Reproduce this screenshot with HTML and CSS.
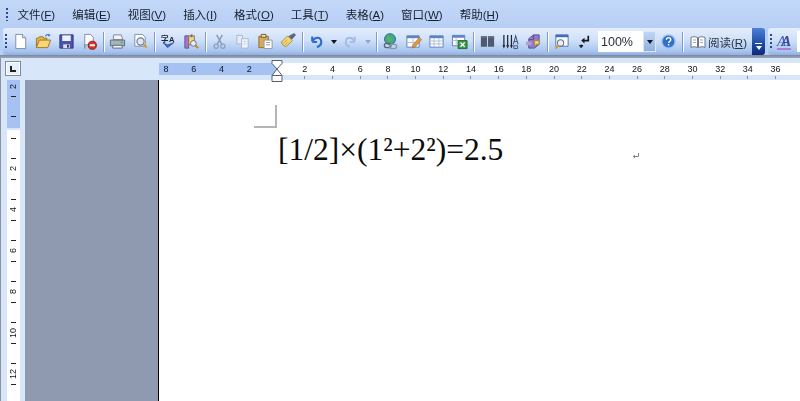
FILE: index.html
```html
<!DOCTYPE html>
<html lang="zh">
<head>
<meta charset="utf-8">
<title>文档</title>
<link rel="stylesheet" href="styles.css">
</head>
<body>
<div class="app">
  <nav class="menubar">
    <span class="grip grip-menu"></span>
    <span class="menu-item">文件(<u>F</u>)</span>
    <span class="menu-item">编辑(<u>E</u>)</span>
    <span class="menu-item">视图(<u>V</u>)</span>
    <span class="menu-item">插入(<u>I</u>)</span>
    <span class="menu-item">格式(<u>O</u>)</span>
    <span class="menu-item">工具(<u>T</u>)</span>
    <span class="menu-item">表格(<u>A</u>)</span>
    <span class="menu-item">窗口(<u>W</u>)</span>
    <span class="menu-item">帮助(<u>H</u>)</span>
  </nav>

  <div class="toolrow">
    <div class="toolbar">
      <span class="gripbox"><span class="grip"></span></span>
      <span class="slot"><svg viewBox="0 0 18 18"><path d="M4 1.500h7l3.500 3.500v11.500H4z" fill="#fff" stroke="#7f8ba3"/><path d="M11 1.500V5h3.500" fill="#dfe7f5" stroke="#7f8ba3"/></svg></span>
      <span class="slot"><svg viewBox="0 0 18 18"><path d="M1.500 15.500V5.500h2l1-1.500h4l1 1.500h3v2" fill="#e8b84a" stroke="#9a7420"/><path d="M1.500 15.500l3-8h12l-3 8z" fill="#f7d774" stroke="#9a7420"/><path d="M11 3.500c1-2 3-2.500 4.500-1" fill="none" stroke="#4a78c8" stroke-width="1.200"/><path d="M14.500 0.500l2 2.500-2.800 .6z" fill="#4a78c8"/></svg></span>
      <span class="slot"><svg viewBox="0 0 18 18"><path d="M2 2h14v14H2z" fill="#4a55a8" stroke="#2d3480"/><path d="M4.500 2.500h9v6h-9z" fill="#eef1fb"/><path d="M5.500 12h7v4h-7z" fill="#d8dcef"/><path d="M9.500 12.500h2v3h-2z" fill="#2d3480"/></svg></span>
      <span class="slot"><svg viewBox="0 0 18 18"><path d="M4 1.500h6l3 3v8H4v4z" fill="#fff" stroke="#7f8ba3"/><circle cx="12" cy="13" r="4.300" fill="#d8362a" stroke="#8e1e16"/><path d="M9.300 12h5.400v2H9.300z" fill="#fff"/></svg></span>
      <span class="sep"></span>
      <span class="slot"><svg viewBox="0 0 18 18"><path d="M5 2h8l1.500 5h-10z" fill="#f2f4f7" stroke="#7d8794"/><path d="M1.500 7.500h15v6h-15z" fill="#a9b2bd" stroke="#5f6a76"/><path d="M4 13h10v3H4z" fill="#eef0f3" stroke="#5f6a76"/><path d="M12.500 9h2v2h-2z" fill="#3cc24a"/></svg></span>
      <span class="slot"><svg viewBox="0 0 18 18"><path d="M3 1.500h8l3 3V14H3z" fill="#fff" stroke="#7f8ba3"/><circle cx="9" cy="9" r="3.800" fill="#dbe8f8" stroke="#6d7a90" stroke-width="1.200"/><path d="M12 12l3.500 3.500" stroke="#d69a2a" stroke-width="2.200"/></svg></span>
      <span class="sep"></span>
      <span class="slot"><svg viewBox="0 0 18 18"><text x="1" y="9.500" class="glyph">字</text><text x="9.500" y="9.500" class="glyph-latin">A</text><path d="M3.500 10.500l4.500 5 7-5.500-7 2.500z" fill="#3568c4" stroke="#274a9a" stroke-width=".6"/></svg></span>
      <span class="slot"><svg viewBox="0 0 18 18"><path d="M2 3h4v13H2z" fill="#a678c8" stroke="#6a4a94"/><path d="M6 3h6v9H6z" fill="#f0d78c" stroke="#8a7440"/><path d="M8 1.500h2v3H8z" fill="#6a6f7a"/><circle cx="11" cy="11" r="3" fill="#e8eef8" stroke="#6b6b6b"/><path d="M13 13l3 3" stroke="#b98a2a" stroke-width="2"/></svg></span>
      <span class="sep"></span>
      <span class="slot"><svg viewBox="0 0 18 18"><circle cx="5.500" cy="14" r="2.200" fill="none" stroke="#8ea0bc" stroke-width="1.400"/><circle cx="12.500" cy="14" r="2.200" fill="none" stroke="#8ea0bc" stroke-width="1.400"/><path d="M6.500 12L12 2M11.500 12L6 2" stroke="#8a9ab5" stroke-width="1.500"/></svg></span>
      <span class="slot"><svg viewBox="0 0 18 18"><path d="M3 2.500h6v9H3z" fill="#e6ecf6" stroke="#a9b7cd"/><path d="M8 6h7v10H8z" fill="#eef2f9" stroke="#a9b7cd"/><path d="M10 9h3M10 11.500h3" stroke="#c4cfe0"/></svg></span>
      <span class="slot"><svg viewBox="0 0 18 18"><path d="M2 3.500h10v12H2z" fill="#d9a957" stroke="#8f6b2c"/><path d="M4.500 1.500h5v3h-5z" fill="#f2e4a0" stroke="#6b5a2c"/><path d="M7.500 7.500h8.500v9H7.500z" fill="#fff" stroke="#8d96a8"/><path d="M9.500 10h4.500M9.500 12.500h4.500" stroke="#8d96a8"/></svg></span>
      <span class="slot"><svg viewBox="0 0 18 18"><path d="M1.500 9.500L8 3l5 5-6.500 6.500c-2-.3-4.700-2.500-5-5z" fill="#f3d677" stroke="#a48a38"/><path d="M3.500 11L8 7M5 13l3-3" stroke="#b99a45" stroke-width=".8"/><path d="M9.500 3.500l3 3 4-4.500-1.500-1.500z" fill="#5a6a85" stroke="#3f4c66" stroke-width=".6"/></svg></span>
      <span class="sep"></span>
      <span class="slot"><svg viewBox="0 0 18 18"><path d="M4.500 9V3.800M4.500 9.500h5.200" stroke="#2f6bd0" stroke-width="2.300" fill="none"/><path d="M5 8.500C7 4 13.500 3.500 14 9c.3 3-2 5-4.500 6" fill="none" stroke="#2f6bd0" stroke-width="2.300"/></svg></span>
      <span class="drop"><i class="tri"></i></span>
      <span class="slot"><svg viewBox="0 0 18 18"><path d="M13.500 9V3.800M13.500 9.500H8.300" stroke="#a3bde4" stroke-width="2.100" fill="none"/><path d="M13 8.500C11 4 4.500 3.500 4 9c-.3 3 2 5 4.500 6" fill="none" stroke="#a3bde4" stroke-width="2.100"/></svg></span>
      <span class="drop drop-wide"><i class="tri tri-off"></i></span>
      <span class="sep"></span>
      <span class="slot"><svg viewBox="0 0 18 18"><circle cx="8.500" cy="6.500" r="5.800" fill="#3da6a0" stroke="#276f78"/><path d="M5 3.500c2-1 3 1 5 .5l1 3-3 3-3-2z" fill="#59b254"/><rect x="2.500" y="11" width="7" height="4.500" rx="2.200" fill="none" stroke="#5a6472" stroke-width="1.400"/><rect x="8" y="12" width="7.500" height="4.500" rx="2.200" fill="none" stroke="#8c96a5" stroke-width="1.400"/></svg></span>
      <span class="slot"><svg viewBox="0 0 18 18"><path d="M2 3h13v12H2z" fill="#fff" stroke="#5c7fb8"/><path d="M2 3h13v2.500H2z" fill="#5c82c0"/><path d="M8.500 5.500V15M2 10h13" stroke="#a8bddb"/><path d="M7.500 16l1-3.500L15 5l2.500 2L11 14.500z" fill="#e8973c" stroke="#9c5d1f" stroke-width=".6"/></svg></span>
      <span class="slot"><svg viewBox="0 0 18 18"><path d="M2 3h14v12H2z" fill="#fff" stroke="#5c7fb8"/><path d="M2 3h14v2.500H2z" fill="#5c82c0"/><path d="M6.500 5.500V15M11.500 5.500V15M2 8.500h14M2 11.500h14" stroke="#a8bddb"/></svg></span>
      <span class="slot"><svg viewBox="0 0 18 18"><path d="M1.500 2.500h13v11h-13z" fill="#fff" stroke="#5c7fb8"/><path d="M1.500 2.500h13V5h-13z" fill="#5c82c0"/><path d="M5.500 5v8.500M1.500 8h13" stroke="#a8bddb"/><path d="M7.500 8h9.500v8.500H7.500z" fill="#3c9a4a" stroke="#256b33"/><path d="M10 10l4.500 4.500M14.500 10L10 14.500" stroke="#fff" stroke-width="1.300"/></svg></span>
      <span class="sep"></span>
      <span class="slot"><svg viewBox="0 0 18 18"><path d="M2 3.500h6.500v11H2zM9.500 3.500H16v11H9.500z" fill="#4f5a70"/><path d="M2 3.500h6.500v1.500H2zM9.500 3.500H16v1.500H9.500z" fill="#68738a"/></svg></span>
      <span class="slot"><svg viewBox="0 0 18 18"><path d="M2 2v12M6 2v12M10 2v12" stroke="#1d2430" stroke-width="1.300"/><path d="M.5 13h3L2 16.500zM4.500 13h3L6 16.500zM8.500 13h3L10 16.500z" fill="#1d2430"/><path d="M12 12l2.500-9 2.500 9M13 9h3" fill="none" stroke="#3f557c" stroke-width="1.100"/><path d="M12.500 13.500h4v3h-4z" fill="none" stroke="#3f557c"/></svg></span>
      <span class="slot"><svg viewBox="0 0 18 18"><path d="M4 6l5-4h6v10l-5 4H4z" fill="#8f7ac8" stroke="#5c4a94"/><path d="M9 2v5H4" fill="none" stroke="#5c4a94"/><path d="M10 8h5v4h-3l-2 2z" fill="#f1d36e" stroke="#a18b36"/><path d="M1 9h6v4H1z" fill="#b39ddb"/></svg></span>
      <span class="sep"></span>
      <span class="slot"><svg viewBox="0 0 18 18"><path d="M3 2h13v12H3z" fill="#fff" stroke="#4a72b5"/><path d="M3 2h13v2.500H3z" fill="#3f6dbd"/><circle cx="8" cy="10.500" r="3.300" fill="#e9f0fa" stroke="#6b7385" stroke-width="1.100"/><path d="M6 13l-3.500 3.500" stroke="#d49a2c" stroke-width="2.200"/></svg></span>
      <span class="slot"><svg viewBox="0 0 18 18"><path d="M13 3v5H8" fill="none" stroke="#16181f" stroke-width="1.800"/><path d="M9 5L5.500 8 9 11z" fill="#16181f"/><path d="M5.500 12.500v3M3.500 13.500h4" stroke="#16181f" stroke-width="1.800"/></svg></span>
      <span class="combo"><span class="combo-value">100%</span><span class="combo-btn"><i class="tri"></i></span></span>
      <span class="slot"><svg viewBox="0 0 18 18"><circle cx="9" cy="9" r="7" fill="#2f6fd0" stroke="#a8c0e6" stroke-width="1.500"/><path d="M6.800 7.200c0-3 4.600-3 4.600-.1 0 1.900-2.300 1.900-2.300 3.500" fill="none" stroke="#fff" stroke-width="1.500"/><path d="M8.300 11.700h1.600v1.600H8.300z" fill="#fff"/></svg></span>
      <span class="sep"></span>
      <span class="read"><svg class="book" viewBox="0 0 16 14"><path d="M1 2.500c2-1 4-1 6.500 0v10c-2.500-1-4.500-1-6.500 0zM8.500 2.500c2.500-1 4.500-1 6.500 0v10c-2-1-4-1-6.500 0z" fill="#fff" stroke="#6f7583"/><path d="M3 5h3M3 7.500h3M10 5h3M10 7.500h3" stroke="#a0a6b3"/></svg><span class="read-label">阅读(<u>R</u>)</span></span>
    </div>
    <span class="chevron"><i class="chev-bar"></i><i class="tri tri-white"></i></span>
    <div class="toolbar toolbar-format">
      <span class="gripbox"><span class="grip"></span></span>
      <span class="style-a">A<b>A</b></span>
      <span class="format-box"></span>
    </div>
  </div>

  <div class="divider"></div>

  <div class="hruler-row">
    <span class="tab-box"><i class="tab-l"></i></span>
    <div class="hruler">
      <div class="hr-margin">
        <span class="hr-cell">8</span><span class="hr-cell">6</span><span class="hr-cell">4</span><span class="hr-cell">2</span>
      </div>
      <div class="hr-text">
        <span class="hr-cell">2</span><span class="hr-cell">4</span><span class="hr-cell">6</span><span class="hr-cell">8</span><span class="hr-cell">10</span><span class="hr-cell">12</span><span class="hr-cell">14</span><span class="hr-cell">16</span><span class="hr-cell">18</span><span class="hr-cell">20</span><span class="hr-cell">22</span><span class="hr-cell">24</span><span class="hr-cell">26</span><span class="hr-cell">28</span><span class="hr-cell">30</span><span class="hr-cell">32</span><span class="hr-cell">34</span><span class="hr-cell">36</span>
      </div>
      <svg class="indent" viewBox="0 0 12 22"><path d="M1 .5h10v3L6 9 1 3.500zM1 15.500L6 9l5 6.500zM1 15.500h10v6H1z" fill="#fff" stroke="#55606f"/></svg>
    </div>
  </div>

  <div class="workspace">
    <aside class="vruler">
      <div class="vr-margin">
        <span class="vr-slot"><b>2</b></span><span class="vr-slot"><i></i></span><span class="vr-slot"></span><span class="vr-slot"><i></i></span>
      </div>
      <div class="vr-text">
        <span class="vr-slot"><i></i></span><span class="vr-slot"></span><span class="vr-slot"><i></i></span><span class="vr-slot"><b>2</b></span>
        <span class="vr-slot"><i></i></span><span class="vr-slot"></span><span class="vr-slot"><i></i></span><span class="vr-slot"><b>4</b></span>
        <span class="vr-slot"><i></i></span><span class="vr-slot"></span><span class="vr-slot"><i></i></span><span class="vr-slot"><b>6</b></span>
        <span class="vr-slot"><i></i></span><span class="vr-slot"></span><span class="vr-slot"><i></i></span><span class="vr-slot"><b>8</b></span>
        <span class="vr-slot"><i></i></span><span class="vr-slot"></span><span class="vr-slot"><i></i></span><span class="vr-slot"><b>10</b></span>
        <span class="vr-slot"><i></i></span><span class="vr-slot"></span><span class="vr-slot"><i></i></span><span class="vr-slot"><b>12</b></span>
        <span class="vr-slot"><i></i></span>
      </div>
    </aside>
    <div class="desk"></div>
    <main class="page">
      <div class="crop"></div>
      <p class="formula">[1/2]×(1²+2²)=2.5<svg class="para-mark" viewBox="0 0 8 8"><path d="M6.500 1v3.500H2" fill="none" stroke="#777" stroke-width=".9"/><path d="M3 2.800L.8 4.500 3 6.200z" fill="#777"/></svg></p>
    </main>
  </div>
</div>
</body>
</html>
```

FILE: styles.css
```css
* { box-sizing: border-box; }
html, body { margin: 0; padding: 0; background: #fff; }
.app {
  width: 800px; height: 401px; overflow: hidden;
  display: flex; flex-direction: column;
  font-family: "Liberation Sans", "Noto Sans CJK SC", sans-serif;
}
u { text-decoration: underline; }
i { display: block; }

.menubar {
  height: 28px; flex: none; display: flex; align-items: center; gap: 17.100px;
  padding-left: 6px;
  background: linear-gradient(#c3d8f8, #b7cff5);
  font-size: 11.500px; color: #16202e;
}
.menu-item { white-space: nowrap; filter: blur(.3px); }
.grip {
  display: block; width: 2px; height: 15px;
  background: repeating-linear-gradient(#2b4c8c 0 2px, transparent 2px 4px);
}
.grip-menu { height: 13px; margin-right: -7.700px; }

.toolrow {
  height: 27px; flex: none; display: flex; align-items: stretch; padding-left: 3px;
  background: #b7cff5;
}
.toolbar {
  width: 749px; flex: none; display: flex; align-items: center;
  background: linear-gradient(#e4eefd, #cfe0f9 45%, #a9c5ef 85%, #8fb0e3);
  border-radius: 3px 0 0 3px;
}
.gripbox { width: 6px; flex: none; display: flex; justify-content: center; }
.slot { width: 23px; height: 20px; flex: none; display: flex; align-items: center; justify-content: center; }
.slot svg { width: 17px; height: 17px; display: block; filter: blur(.4px); }
.sep {
  width: 5px; height: 20px; flex: none;
  background: linear-gradient(#7f9cc9, #7f9cc9) 2px 0 / 1px 100% no-repeat,
              linear-gradient(#fff, #fff) 3px 0 / 1px 100% no-repeat;
}
.drop { width: 11px; flex: none; display: flex; justify-content: center; }
.drop-wide { width: 12px; }
.tri { width: 0; height: 0; border-left: 3.500px solid transparent; border-right: 3.500px solid transparent; border-top: 4px solid #10141c; }
.tri-off { border-top-color: #8ea8cf; }
.tri-white { border-top-color: #fff; }
.glyph { font-family: "Noto Sans CJK SC", sans-serif; font-size: 8px; fill: #1d2533; font-weight: 700; }
.glyph-latin { font-family: "Liberation Sans", sans-serif; font-size: 8px; fill: #1d2533; font-weight: 700; }

.combo {
  width: 58px; height: 21px; flex: none; margin: 0 1px 0 2px;
  display: flex; align-items: center; justify-content: space-between;
  background: #fff; font-size: 12.500px; color: #28303d;
}
.combo-value { padding-left: 3px; filter: blur(.3px); }
.combo-btn {
  width: 13px; height: 21px; display: flex; align-items: center; justify-content: center;
  background: linear-gradient(#c2d6f4, #8fb0df); border: 1px solid #dbe7f8;
}
.read { flex: 1; display: flex; align-items: center; font-size: 11.500px; color: #2c3340; }
.book { width: 16px; height: 14px; margin: 0 2px 0 5px; display: block; filter: blur(.4px); }
.read-label { white-space: nowrap; filter: blur(.3px); }

.chevron {
  width: 13px; flex: none; display: flex; flex-direction: column; align-items: center;
  justify-content: flex-end; gap: 2px; padding-bottom: 5px;
  background: linear-gradient(#4d80d8, #1c4aa3 60%, #0c2a78);
  border-radius: 0 3px 3px 0;
}
.chev-bar { width: 7px; height: 1px; background: #fff; }

.toolbar-format {
  width: auto; flex: 1; margin-left: 3px; gap: 1px;
}
.toolbar-format .gripbox { margin-right: 2px; }
.style-a {
  font-family: "Liberation Serif", serif; font-style: italic; font-size: 15px; color: #4e63b8;
  border-bottom: 2px solid #a97fd0; line-height: 14px; width: 14px; white-space: nowrap; letter-spacing: -5px;
  filter: blur(.3px);
}
.style-a b { font-weight: 700; color: #37479c; }
.format-box { width: 10px; height: 21px; margin-left: 5px; background: #fff; flex: none; }

.divider { height: 3px; flex: none; background: linear-gradient(#7c8798, #9aa7bb); }

.hruler-row {
  height: 22px; flex: none; display: flex; align-items: flex-start;
  background: #d8e6fa; padding: 4px 0 0 4px; border-left: 1px solid #8b93a0;
}
.tab-box {
  width: 16px; height: 15px; flex: none; margin-top: -1px;
  border: 1px solid #7d8aa5; background: #e6effc; display: flex; align-items: center; justify-content: center;
  box-shadow: inset 0 0 0 1px #fff;
}
.tab-l { width: 6px; height: 6px; border-left: 2px solid #222; border-bottom: 2px solid #222; }
.hruler { position: relative; margin-left: 138px; flex: 1; display: flex; margin-top: 1px; }
.hr-margin {
  width: 118px; flex: none; height: 12px; display: flex; justify-content: flex-end; padding-right: 14px;
  background: #a5c2f2;
}
.hr-text {
  flex: 1; height: 18px; display: flex; padding-left: 14px;
  background: linear-gradient(#fff 12px, transparent 12px);
}
.hr-cell {
  width: 27.700px; flex: none; height: 12px; line-height: 12px; text-align: center;
  font-size: 9px; color: #10141f; position: relative; filter: blur(.25px);
}
.hr-text .hr-cell::after {
  content: ""; display: block; width: 1px; height: 3px; background: #8a8f99; margin: 1px auto 0;
}
.indent { position: absolute; left: 112px; top: -3px; width: 12px; height: 22px; }

.workspace { flex: 1; min-height: 0; display: flex; }
.vruler {
  width: 25px; flex: none; background: #d8e6fa; padding-left: 6px;
  border-left: 1px solid #8b93a0; display: flex; flex-direction: column; gap: 2px;
}
.vr-margin { width: 13px; height: 48px; padding-top: 1px; background: #a5c2f2; flex: none; }
.vr-text { width: 13px; flex: 1; padding-top: 3px; background: #fff; }
.vr-slot { display: flex; height: 10.250px; align-items: center; justify-content: center; }
.vr-slot i { width: 5px; height: 1px; background: #222; }
.vr-slot b {
  font-weight: 400; font-size: 9px; line-height: 9px; color: #10141f; filter: blur(.25px);
  writing-mode: vertical-rl; transform: rotate(180deg); white-space: nowrap;
}
.desk { width: 133px; flex: none; background: #8f9ab0; }
.page { flex: 1; background: #fff; border-left: 1px solid #000; padding: 25px 0 0 95px; }
.crop { width: 23px; height: 23px; border-right: 2px solid #b5b5b5; border-bottom: 2px solid #b5b5b5; }
.formula {
  margin: 4px 0 0 24px; font-family: "Liberation Serif", serif; font-size: 31.500px; line-height: 36px; color: #0c0c0c;
  white-space: nowrap;
}
.para-mark { width: 8px; height: 8px; margin-left: 129px; }
```
